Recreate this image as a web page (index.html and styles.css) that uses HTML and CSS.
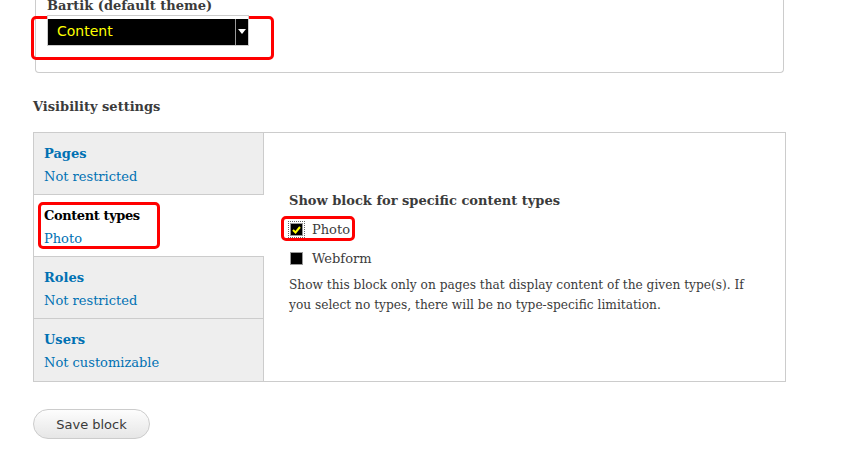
FILE: index.html
```html
<!DOCTYPE html>
<html lang="en">
<head>
  <meta charset="UTF-8" />
  <title>Configure block</title>
  <link rel="stylesheet" href="styles.css">
</head>
<body>

  <!-- Region settings (scrolled, top cut off) -->
  <div class="fieldset">
    <label class="theme-label">Bartik (default theme)</label>
    <div class="select-wrap">
      <span class="mark mark-select"></span>
      <div class="select">
        <span class="select-value">Content</span>
        <span class="select-arrow">
          <svg width="8" height="5" viewBox="0 0 8 5"><path d="M0 0h8L4 5z" fill="#fff"/></svg>
        </span>
      </div>
    </div>
  </div>

  <h2 class="section-title">Visibility settings</h2>

  <!-- Vertical tabs -->
  <div class="vtabs">
    <ul class="vtab-list">
      <li class="vtab">
        <strong>Pages</strong>
        <span class="summary">Not restricted</span>
      </li>
      <li class="vtab selected">
        <span class="mark mark-tab"></span>
        <strong>Content types</strong>
        <span class="summary">Photo</span>
      </li>
      <li class="vtab">
        <strong>Roles</strong>
        <span class="summary">Not restricted</span>
      </li>
      <li class="vtab">
        <strong>Users</strong>
        <span class="summary">Not customizable</span>
      </li>
    </ul>

    <div class="vtab-pane">
      <h3>Show block for specific content types</h3>
      <div class="check-row">
        <span class="mark mark-check"></span>
        <span class="box checked">
          <svg width="9" height="8" viewBox="0 0 9 8"><path d="M1 4l2.5 2.5L8 1" stroke="#ff0" stroke-width="2" fill="none"/></svg>
        </span>
        Photo
      </div>
      <div class="check-row">
        <span class="box"></span>
        Webform
      </div>
      <p class="description">Show this block only on pages that display content of the given type(s). If you select no types, there will be no type-specific limitation.</p>
    </div>
  </div>

  <button class="save">Save block</button>

</body>
</html>
```

FILE: styles.css
```css
/* General */
body {
  margin: 0;
  font-family: "DejaVu Serif", serif;
  color: #3b3b3b;
  background: #fff;
}

/* Red annotation boxes */
.mark {
  position: absolute;
  border: 3px solid #f00;
  border-radius: 5px;
}

/* Region fieldset */
.fieldset {
  margin: -4px 0 0 35px;
  width: 749px;
  height: 77px;
  border: 1px solid #ccc;
  border-top: none;
  border-radius: 0 0 4px 4px;
  padding-left: 11px;
  box-sizing: border-box;
}

.theme-label {
  display: block;
  font-weight: bold;
  font-size: 13px;
  line-height: 20px;
}

.select-wrap {
  position: relative;
  margin-top: -1px;
  width: 202px;
}

.mark-select {
  left: -16px;
  top: 1px;
  width: 237px;
  height: 38px;
}

.select {
  position: relative;
  display: flex;
  height: 26px;
  padding-top: 3px;
  box-sizing: content-box;
  border: 1px solid #ccc;
  background: #000;
  box-shadow: inset 0 3px 0 #fff;
}

.select-value {
  flex: 1;
  padding-left: 9px;
  color: #ff0;
  font-family: "DejaVu Sans", sans-serif;
  font-size: 14px;
  line-height: 25px;
}

.select-arrow {
  width: 13px;
  border-left: 1px solid #999;
  display: flex;
  justify-content: center;
  padding-top: 10px;
  box-sizing: border-box;
}

.select-arrow svg {
  display: block;
}

/* Section title */
.section-title {
  margin: 24px 0 15px 33px;
  font-size: 13px;
  line-height: 20px;
  color: #3b3b3b;
}

/* Vertical tabs */
.vtabs {
  display: flex;
  margin-left: 33px;
  width: 753px;
  height: 250px;
  border: 1px solid #ccc;
  box-sizing: border-box;
}

.vtab-list {
  list-style: none;
  margin: 0;
  padding: 0;
  width: 229px;
  background: #eee;
  border-right: 1px solid #ccc;
}

.vtab {
  position: relative;
  height: 62px;
  padding: 10px 0 0 10px;
  box-sizing: border-box;
  border-bottom: 1px solid #ccc;
}

.vtab:last-child {
  border-bottom: none;
}

.vtab.selected {
  background: #fff;
  margin-right: -1px;
}

.vtab strong {
  display: block;
  color: #0071b3;
  font-size: 13px;
  line-height: 22px;
}

.vtab.selected strong {
  color: #000;
  letter-spacing: -0.4px;
}

.vtab .summary {
  display: block;
  color: #0071b3;
  font-size: 13px;
  line-height: 24px;
}

.mark-tab {
  left: 4px;
  top: 7px;
  width: 116px;
  height: 41px;
}

/* Tab pane */
.vtab-pane {
  flex: 1;
  padding: 57px 25px 0 25px;
}

.vtab-pane h3 {
  margin: 0 0 3px;
  font-size: 13px;
  line-height: 22px;
  color: #3b3b3b;
}

.check-row {
  position: relative;
  display: flex;
  align-items: center;
  gap: 9px;
  height: 29px;
  font-size: 13px;
  padding-left: 1px;
}

.mark-check {
  left: -8px;
  top: 1px;
  width: 68px;
  height: 19px;
}

.box {
  width: 11px;
  height: 11px;
  border: 1px solid #999;
  background: #000;
  display: flex;
  align-items: center;
  justify-content: center;
}

.box.checked {
  outline: 1px dotted #666;
  outline-offset: 1px;
}

.description {
  margin: 2px 0 0;
  font-size: 12.2px;
  line-height: 20px;
}

/* Save button */
.save {
  margin: 27px 0 0 33px;
  width: 117px;
  height: 30px;
  border: 1px solid #ccc;
  border-radius: 15px;
  background: linear-gradient(#fdfdfd, #e6e6e6);
  color: #3a3a3a;
  font-family: "DejaVu Sans", sans-serif;
  font-size: 13px;
}
```
